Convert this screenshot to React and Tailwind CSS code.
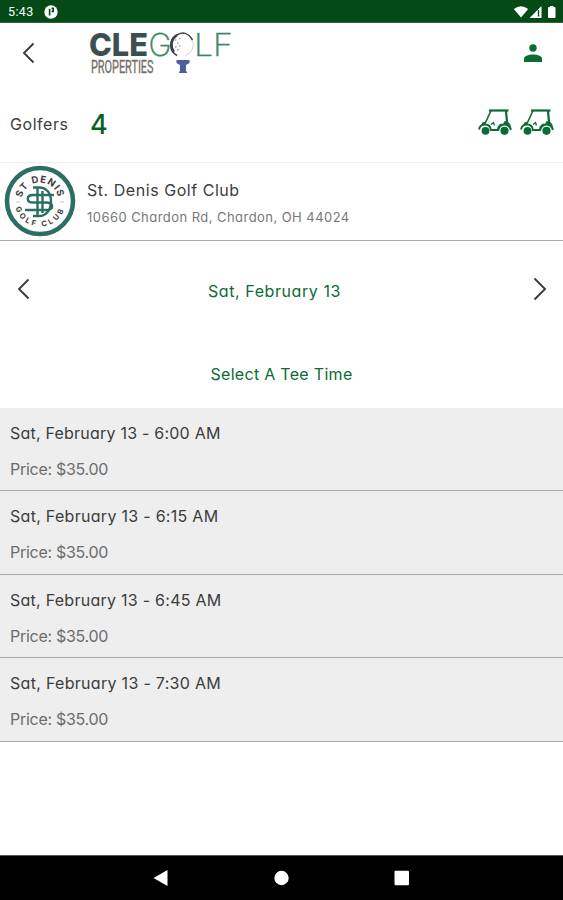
const teeTimes = [
  { time: "Sat, February 13 - 6:00 AM", price: "$35.00", tracking: "tracking-[0.22px]" },
  { time: "Sat, February 13 - 6:15 AM", price: "$35.00", tracking: "tracking-[0.29px]" },
  { time: "Sat, February 13 - 6:45 AM", price: "$35.00", tracking: "tracking-[0.26px]" },
  { time: "Sat, February 13 - 7:30 AM", price: "$35.00", tracking: "tracking-[0.3px]" },
];

function StatusBar() {
  return (
    <div className="flex h-[23px] shrink-0 items-center justify-between border-b border-[#2f6340] bg-[#044a16] pr-[6px] pl-2 text-white">
      <div className="flex items-center gap-[10px] pt-[2px]">
        <span className="font-['Roboto',sans-serif] text-[12.5px] tracking-[0.4px]">5:43</span>
        <svg width="14" height="14" viewBox="0 0 14 14">
          <circle cx="7" cy="7" r="6.7" fill="#fff" />
          <path d="M5.6 10.5V3.8M7.6 3.4h1.600v3h-1.600" fill="none" stroke="#044a16" strokeWidth="1.6" />
        </svg>
      </div>
      <svg width="44" height="14" viewBox="0 0 44 14" fill="#fff" className="mt-px">
        <path d="M0.8 4Q8 -1.5 15.2 4L8 12.5Z" />
        <path d="M28.5 1v12H16.5Z" />
        <path d="M25.5 5v6.5" stroke="#044a16" strokeWidth="1.4" />
        <path d="M35 3q0-1 1-1h1V1h3.5v1h1q1 0 1 1v9q0 1-1 1H36q-1 0-1-1Z" />
      </svg>
    </div>
  );
}

function Chevron({ right = false }) {
  return (
    <svg width="14" height="24" viewBox="0 0 14 24" fill="none" stroke="#3c3c3c" strokeWidth="1.9">
      <path d={right ? "M1.5 1.5 12 12 1.5 22.5" : "M12.5 2.5 3 12l9.500 9.500"} />
    </svg>
  );
}

function Logo() {
  return (
    <svg width="150" height="54" viewBox="0 -5 150 54">
      <text x="0" y="28" fontFamily="Inter, sans-serif" fontSize="31.500" fontWeight="800" fill="#3b4f52" textLength="59" lengthAdjust="spacingAndGlyphs">
        CLE
      </text>
      <text x="59.500" y="28" fontFamily="Inter, sans-serif" fontSize="31.500" fontWeight="200" fill="#3c8763" stroke="#3c8763" strokeWidth="0.4" textLength="23" lengthAdjust="spacingAndGlyphs">
        G
      </text>
      <path d="M88 27.500A11.500 11.500 0 0 1 87 7.500Q97 1 103.500 12" fill="none" stroke="#3d3f46" strokeWidth="1.5" />
      <path d="M85 24A12 12 0 0 1 88 7" fill="none" stroke="#3d3f46" strokeWidth="2.2" />
      <path d="M103.500 12A11.500 11.500 0 0 1 96 27.500" fill="none" stroke="#c5c8cb" strokeWidth="0.8" />
      <path d="M86 12h1.500M90 10.500h1.500M88 15h1.500M86 19h1.500M90 18h1.500M88 22h1.500" stroke="#9b9ea3" strokeWidth="1.5" />
      <text x="105" y="28" fontFamily="Inter, sans-serif" fontSize="31.500" fontWeight="200" fill="#3c8763" stroke="#3c8763" strokeWidth="0.4" textLength="39" lengthAdjust="spacingAndGlyphs">
        LF
      </text>
      <text x="2" y="45" fontFamily="Roboto, sans-serif" fontSize="18" fill="#756f68" stroke="#756f68" strokeWidth="0.4" textLength="62.500" lengthAdjust="spacingAndGlyphs">
        PROPERTIES
      </text>
      <path d="M87.500 32h13v3l-3.500 2v6.500h1v1.500h-8v-1.500h1V37l-3.500-2Z" fill="#4d5da0" />
    </svg>
  );
}

function PersonIcon() {
  return (
    <svg width="18" height="18" viewBox="0 0 18 18" fill="#0b6b34">
      <circle cx="9" cy="4" r="3.7" />
      <path d="M0 18v-3c0-3 4-4.500 9-4.500s9 1.500 9 4.500v3Z" />
    </svg>
  );
}

function Cart() {
  return (
    <svg width="34" height="27" viewBox="0 0 34 27" fill="none" stroke="#0b6b34" strokeWidth="1.6">
      <path d="M11 1.500h19.500" strokeWidth="2.200" />
      <path d="M12.800 2 7.500 13.500 5 16" />
      <path d="M28 2l1 11" strokeWidth="2.200" />
      <path d="M1 20.500c.5-3.500 3-5 6-5s5.500 1.500 5.800 5.500H20" strokeWidth="1.800" />
      <path d="M7.500 13.500 4 14.500" />
      <path d="M19 21.500l1-4 2.500-2.500h3l1-2.500h3l2.500 3 1.500 5-1.500.5c-1-3.500-8.500-4.500-10 .5Z" fill="#0b6b34" strokeWidth="0.6" />
      <path d="m13 15.500 2.500-2 1 3" strokeWidth="1.300" />
      <circle cx="7.500" cy="21.800" r="3.900" fill="#0b6b34" stroke="none" />
      <circle cx="26.500" cy="21.800" r="4.700" fill="#0b6b34" stroke="#fff" strokeWidth="1.200" />
    </svg>
  );
}

function ClubBadge() {
  return (
    <svg width="72" height="72" viewBox="0 0 72 72" className="mt-[-2px]">
      <circle cx="36" cy="36" r="33" fill="#fff" stroke="#2c6f62" strokeWidth="4.5" />
      <path id="badge-top" d="M17.500 36a18.500 18.500 0 0 1 37 0" fill="none" />
      <path id="badge-bottom" d="M10.500 36a25.500 25.500 0 0 0 51 0" fill="none" />
      <g fontFamily="Inter, sans-serif" fontWeight="700" fill="#3f3c3a" textAnchor="middle">
        <text fontSize="9.5" letterSpacing="1">
          <textPath href="#badge-top" startOffset="50%">
            ST DENIS
          </textPath>
        </text>
        <text fontSize="7.5" letterSpacing="2.6">
          <textPath href="#badge-bottom" startOffset="50%">
            GOLF CLUB
          </textPath>
        </text>
      </g>
      <path d="M12 37h4M56 37h4" stroke="#c5c9c7" strokeWidth="1.2" />
      <g fill="none" stroke="#2c6f62" strokeWidth="2.4">
        <path d="M29 22.500h6c7.500 0 12 5.500 12 14S42 51 35 51h-6" />
        <path d="M33.500 22.500V51M38.500 26v22" />
        <path d="M50 30H29c-7 0-7 7.500 0 7.500h13c8 0 8 7.500 1 7.500H21" />
      </g>
    </svg>
  );
}

function NavBar() {
  return (
    <nav className="mt-auto flex h-[45px] shrink-0 items-center border-t border-[#555555] bg-black pl-[153px]">
      <svg width="257" height="16" viewBox="0 0 257 16" fill="#fff">
        <path d="M0.5 8 14.5 0v16Z" />
        <circle cx="128.5" cy="8" r="7.2" />
        <rect x="241.5" y="0.7" width="14.5" height="14.5" rx="1" />
      </svg>
    </nav>
  );
}

function App() {
  return (
    <div className="flex h-[900px] w-[563px] flex-col overflow-hidden bg-white font-['Inter',sans-serif] text-[#3c3c3c] [font-feature-settings:'cv11']">
      <StatusBar />
      <header className="flex h-[63px] shrink-0 items-start pr-[21px] pl-[21px]">
        <div className="mt-[18px]">
          <Chevron />
        </div>
        <div className="ml-[54px]">
          <Logo />
        </div>
        <div className="mt-[21px] ml-auto">
          <PersonIcon />
        </div>
      </header>

      <section className="flex h-[76px] shrink-0 items-center px-[9px]">
        <span className="ml-px w-[80px] text-base tracking-[0.55px]">Golfers</span>
        <span className="pt-[2px] text-[27px] font-medium text-[#0a5f2a]">4</span>
        <div className="mt-[-3px] ml-auto flex gap-[8px]">
          <Cart />
          <Cart />
        </div>
      </section>

      <section className="flex h-[79px] shrink-0 items-center border-t border-b border-t-[#eeeeee] border-b-[#aaaaaa] pl-1">
        <ClubBadge />
        <div className="ml-[11px]">
          <h1 className="pt-px text-base leading-6 tracking-[0.54px]">St. Denis Golf Club</h1>
          <p className="mt-[5px] text-[13px] leading-5 tracking-[0.45px] text-[#777777]">
            10660 Chardon Rd, Chardon, OH 44024
          </p>
        </div>
      </section>

      <section className="flex h-[97px] shrink-0 items-center justify-between px-4 pb-px text-[#0b6b34]">
        <Chevron />
        <span className="pt-[3px] pr-[14px] text-base tracking-[0.58px]">Sat, February 13</span>
        <Chevron right />
      </section>
      <h2 className="h-[70px] shrink-0 pt-6 text-center text-base tracking-[0.3px] text-[#0b6b34]">
        Select A Tee Time
      </h2>

      <ul className="bg-[#eeeeee]">
        {teeTimes.map((t) => (
          <li
            key={t.time}
            className="border-b border-[#aaaaaa] px-[10px] pt-[13px] odd:h-[83px] even:h-[84px]"
          >
            <p className={`text-base leading-6 ${t.tracking}`}>{t.time}</p>
            <p className="mt-3 text-base leading-6 tracking-[-0.28px] text-[#6c6c6c]">
              Price: {t.price}
            </p>
          </li>
        ))}
      </ul>

      <NavBar />
    </div>
  );
}

export default App;
